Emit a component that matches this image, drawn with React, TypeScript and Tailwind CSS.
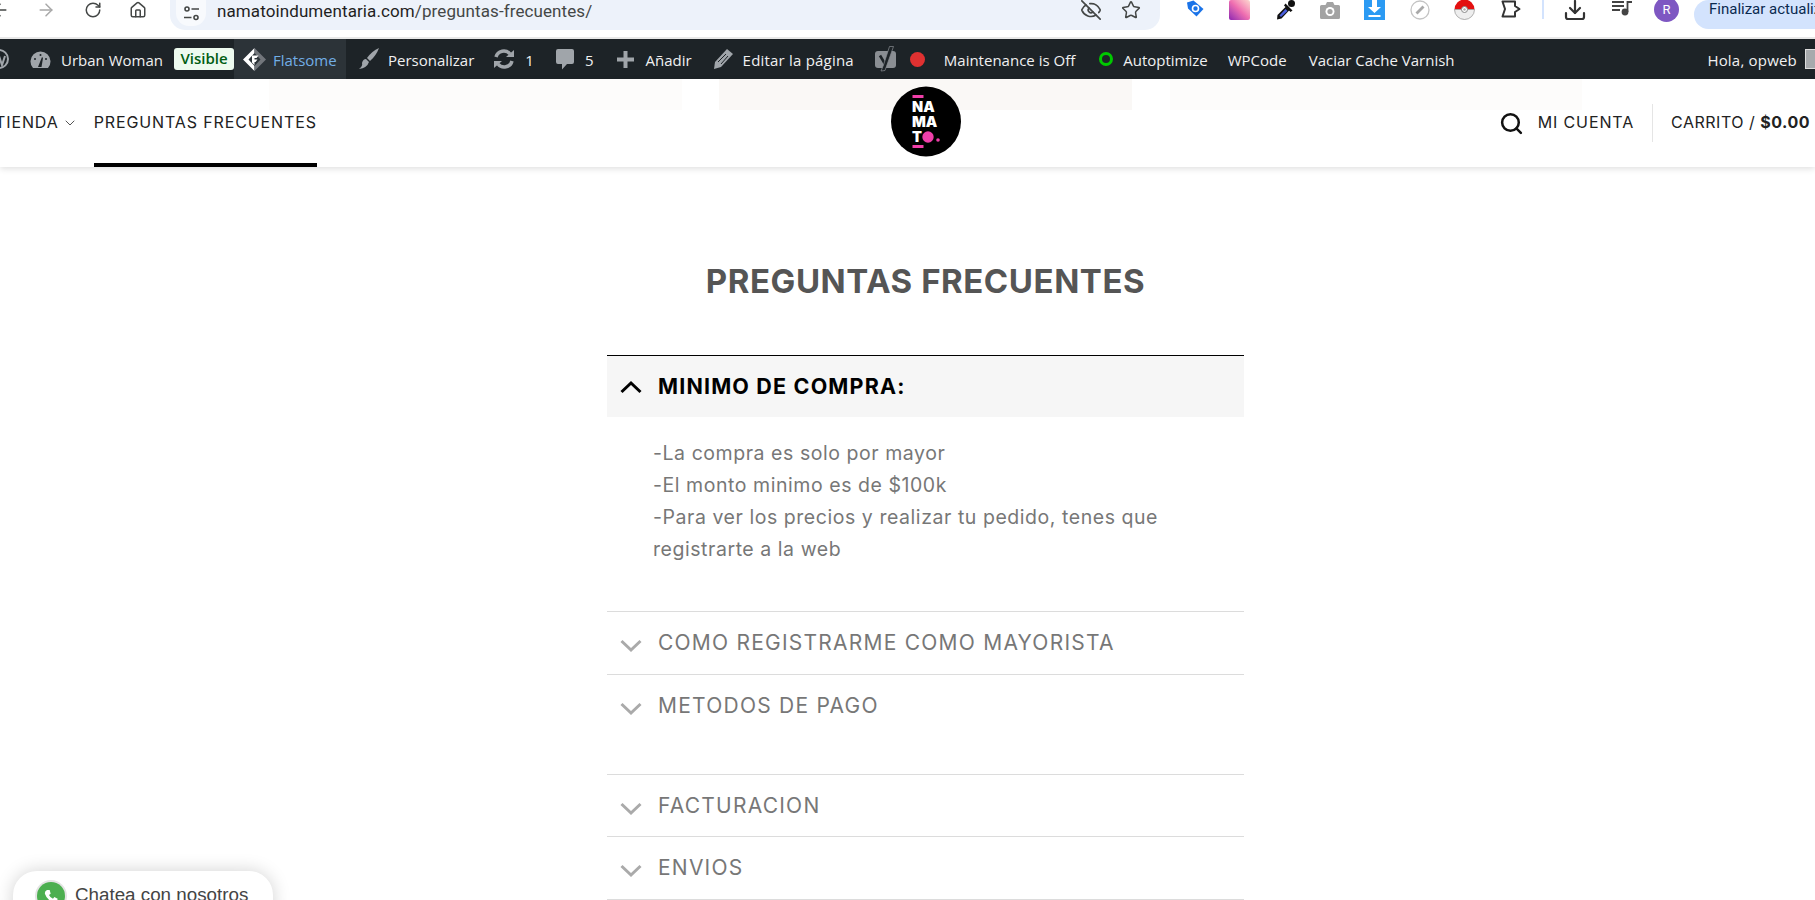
import { ArrowLeft, ArrowRight, RotateCw, House, EyeOff, Star, Search, ChevronDown, Download } from "lucide-react";

const UI = "font-['Open_Sans','Noto_Sans',sans-serif]";
const M = "font-['Inter','Liberation_Sans',sans-serif]";

function Chevron({ up, className }: { up?: boolean; className?: string }) {
  return (
    <svg width="22" height="14" viewBox="0 0 22 14" fill="none" className={className}>
      <path d={up ? "M1.5 12L11 3L20.5 12" : "M1.5 2L11 11L20.5 2"} stroke="currentColor" strokeWidth="3" />
    </svg>
  );
}

function Row({ label, tall }: { label: string; tall?: boolean }) {
  return (
    <div className={`border-t border-[#dcdcdc] ${tall ? "h-[100px]" : "h-[62.5px]"} pt-[20px] flex items-start`}>
      <Chevron className="ml-[13px] mt-[7px] text-[#aaaaaa] shrink-0" />
      <span className={`ml-[16px] text-[21px] leading-[22px] tracking-[1.23px] text-[#777777] ${M}`}>{label}</span>
    </div>
  );
}

function ChromeBar() {
  return (
    <div className="h-[37px] flex items-start bg-white overflow-hidden [&>*]:shrink-0">
      <ArrowLeft size={20} className="ml-[-10px] text-[#444746]" strokeWidth={1.8} />
      <ArrowRight size={20} className="ml-[26px] text-[#a8a8a8]" strokeWidth={1.8} />
      <RotateCw size={18} className="ml-[28px] mt-[1px] text-[#444746]" strokeWidth={2} />
      <House size={18} className="ml-[27px] mt-[1px] text-[#444746]" strokeWidth={2} />
      <div className="ml-[23px] w-[990px] h-[30px] bg-[#edf2fa] rounded-b-[15px] flex items-start relative">
        <div className="ml-[6px] w-[30px] h-[26px] rounded-b-[13px] bg-[#f8fafd] flex items-center justify-center">
          <svg width="17" height="17" viewBox="0 0 17 17" fill="none" stroke="#444746" strokeWidth="1.6">
            <circle cx="4" cy="4" r="2" />
            <path d="M8.5 4H16M1 12.5H8.5" />
            <circle cx="13" cy="12.5" r="2" />
          </svg>
        </div>
        <span className="ml-[11px] text-[17px] leading-[22px] text-[#1f1f1f] font-['Roboto',sans-serif] tracking-[0.1px]">
          namatoindumentaria.com<span className="text-[#444746]">/preguntas-frecuentes/</span>
        </span>
        <EyeOff size={22} className="absolute left-[910px] top-[-1px] text-[#444746]" strokeWidth={1.8} />
        <Star size={20} className="absolute left-[951px] top-[0px] text-[#444746]" strokeWidth={1.8} />
      </div>

      {/* price tag */}
      <svg width="19" height="18" viewBox="0 0 19 18" className="ml-[26px]">
        <path d="M1 2.5L7.5 0.5L17.5 9L10.5 16.5L2 8.5Z" fill="#1a73e8" />
        <circle cx="9.5" cy="8.5" r="3" fill="none" stroke="#fff" strokeWidth="1.6" />
      </svg>
      <div className="ml-[24px] w-[21px] h-[20px] rounded-[2px] bg-gradient-to-bl from-[#fbd9cf] via-[#ee6db0] to-[#8f1fb0]" />
      {/* eyedropper */}
      <svg width="20" height="20" viewBox="0 0 20 20" className="ml-[26px]">
        <circle cx="15.5" cy="3.5" r="3.5" fill="#111" />
        <path d="M9.5 3.5L16.5 10.5L14.5 12L8 5.5Z" fill="#111" />
        <path d="M10 6.5L13.5 10L5.5 18.5L1 19.5L1.5 15Z" fill="#111" />
        <path d="M9.5 9L11.5 11L5 17L3.5 15.5Z" fill="#4a5fe0" />
      </svg>
      {/* camera */}
      <svg width="20" height="18" viewBox="0 0 20 18" className="ml-[24px] mt-[1px]">
        <path d="M1.5 4H5.5L7 1H13L14.5 4H18.5Q20 4 20 5.5V16.5Q20 18 18.5 18H1.5Q0 18 0 16.5V5.5Q0 4 1.5 4Z" fill="#a3a3a3" />
        <circle cx="10" cy="10.5" r="4.5" fill="#fff" />
        <circle cx="10" cy="10.5" r="2.6" fill="#a3a3a3" />
      </svg>
      {/* blue download */}
      <svg width="21" height="20" viewBox="0 0 21 20" className="ml-[24px]">
        <rect width="21" height="20" fill="#2b9af3" />
        <path d="M8 0H13V7H17L10.5 13L4 7H8Z" fill="#fff" />
        <rect x="4.5" y="15" width="12" height="2" fill="#fff" />
      </svg>
      {/* compass */}
      <svg width="20" height="20" viewBox="0 0 20 20" className="ml-[25px]">
        <circle cx="10" cy="10" r="9" fill="#fff" stroke="#c4c4c4" strokeWidth="1.3" />
        <path d="M5.5 12.5L12.5 5.5L14.5 7.5L7.5 14.5Z" fill="#a9a9a9" />
      </svg>
      {/* pokeball */}
      <svg width="21" height="20" viewBox="0 0 21 20" className="ml-[24px]">
        <path d="M0.5 9.5a10 10 0 0 1 20 0Z" fill="#e31010" />
        <path d="M0.5 9.5a10 10 0 0 0 20 0Z" fill="#eeeeee" stroke="#8e8e8e" strokeWidth="0.7" />
        <circle cx="10.5" cy="9.5" r="3" fill="#fff" stroke="#888" />
        <circle cx="10.5" cy="9.5" r="1.2" fill="#aaa" />
      </svg>
      {/* extensions */}
      <svg width="20" height="18" viewBox="0 0 20 18" fill="none" stroke="#333" strokeWidth="2" strokeLinejoin="round" className="ml-[26px]">
        <path d="M1.5 1.5H14V6L18.5 9L14 12V16.5H1.5L4 9Z" />
      </svg>
      <div className="ml-[21px] w-[2px] h-[19px] bg-[#d3e3fd]" />
      <Download size={24} className="ml-[19px] mt-[-2px] text-[#333]" strokeWidth={2.2} />
      {/* queue music */}
      <svg width="20" height="16" viewBox="0 0 20 16" className="ml-[25px]">
        <path d="M0 1H12V3H0ZM0 5H12V7H0ZM0 9H8V11H0Z" fill="#444" />
        <circle cx="13" cy="12" r="3.4" fill="#444" />
        <path d="M14.6 12V1H20V3H16.4V12Z" fill="#444" />
      </svg>
      <div className="ml-[22px] mt-[-3px] w-[25px] h-[25px] rounded-full bg-[#7e57c2] text-white text-[13px] flex items-center justify-center font-['Roboto',sans-serif]">
        R
      </div>
      <div className="ml-[15px] w-[140px] h-[29px] rounded-l-[15px] bg-[#d3e3fd] pl-[15px] overflow-hidden whitespace-nowrap">
        <span className="text-[15px] leading-[18px] block text-[#0b2a50] font-['Roboto',sans-serif]">Finalizar actualización</span>
      </div>
    </div>
  );
}

function WpBar() {
  const gray = "#a0a5aa";
  const item = `mt-[2px] text-[15px] leading-[38px] text-[#f0f0f1] whitespace-nowrap ${UI}`;
  return (
    <div className="h-[40px] bg-[#1d2327] flex items-center overflow-hidden shrink-0 [&>*]:shrink-0">
      <svg width="20" height="20" viewBox="0 0 20 20" className="ml-[-11px]">
        <circle cx="10" cy="10" r="9" fill="none" stroke={gray} strokeWidth="2" />
        <path d="M5 6L9 16L11 10L13 16L16 7" fill="none" stroke={gray} strokeWidth="2" />
      </svg>
      <svg width="21" height="19" viewBox="0 0 21 19" className="ml-[21px]">
        <path d="M3 18A10 10 0 1 1 18 18Z" fill={gray} />
        <path d="M8 17L12 7L13 8L11.5 17Z" fill="#1d2327" />
        <circle cx="5" cy="9" r="1" fill="#1d2327" />
        <circle cx="10.5" cy="5" r="1" fill="#1d2327" />
        <circle cx="16" cy="9" r="1" fill="#1d2327" />
      </svg>
      <span className={`ml-[10px] ${item}`}>Urban Woman</span>
      <span className={`ml-[11px] w-[60px] h-[22px] rounded-[3px] bg-[#edfaef] text-[#005c12] text-[15px] leading-[20px] text-center font-semibold ${UI}`}>Visible</span>
      <div className="w-[112px] h-[40px] bg-[#2c3338] flex items-center">
        <svg width="25" height="25" viewBox="0 0 25 25" className="ml-[8px]">
          <path d="M12.5 1L1 12.5L12.5 24L12.5 19L6.5 12.5L12.5 6Z" fill="#fff" />
          <path d="M12.5 1L24 12.5L12.5 24L12.5 19L18.5 12.5L12.5 6Z" fill="#72767b" />
          <path d="M10 8.5H16.5L14.5 11H12.5V12.5H15.5L13.5 15H12.5V18L10 15.5Z" fill="#fff" />
        </svg>
        <span className={`ml-[6px] mt-[2px] text-[15px] leading-[38px] text-[#72aee6] ${UI}`}>Flatsome</span>
      </div>
      <svg width="22" height="22" viewBox="0 0 22 22" className="ml-[12px]">
        <path d="M21 0Q14 3 9 10L12 13Q18 8 21 0Z" fill={gray} />
        <path d="M8 11L11 14Q9 20 1 21Q5 18 4 15Q5 11 8 11Z" fill={gray} />
      </svg>
      <span className={`ml-[8px] ${item}`}>Personalizar</span>
      <svg width="22" height="20" viewBox="0 0 22 20" fill="none" className="ml-[19px]">
        <path d="M3 8A8 8 0 0 1 17 5" stroke={gray} strokeWidth="3.5" />
        <path d="M19 12A8 8 0 0 1 5 15" stroke={gray} strokeWidth="3.5" />
        <path d="M13 8L21 8L21 1Z" fill={gray} />
        <path d="M9 12L1 12L1 19Z" fill={gray} />
      </svg>
      <span className={`ml-[10px] ${item}`}>1</span>
      <svg width="18" height="21" viewBox="0 0 18 21" className="ml-[22px]">
        <path d="M2 0H16Q18 0 18 2V13Q18 15 16 15H11L6 20.5V15H2Q0 15 0 13V2Q0 0 2 0Z" fill={gray} />
      </svg>
      <span className={`ml-[11px] ${item}`}>5</span>
      <svg width="17" height="17" viewBox="0 0 17 17" className="ml-[24px]">
        <path d="M6.5 0H10.5V6.5H17V10.5H10.5V17H6.5V10.5H0V6.5H6.5Z" fill={gray} />
      </svg>
      <span className={`ml-[11px] ${item}`}>Añadir</span>
      <svg width="19" height="20" viewBox="0 0 19 20" className="ml-[22px]">
        <path d="M13 0L19 5L7 18L0 20L1 13Z" fill={gray} />
        <path d="M4 13L12 5M7 15L14 7" stroke="#1d2327" strokeWidth="1" />
      </svg>
      <span className={`ml-[10px] tracking-[0.2px] ${item}`}>Editar la página</span>
      <svg width="22" height="26" viewBox="0 0 22 26" className="ml-[21px]">
        <rect x="0" y="5" width="21" height="17" rx="3" fill="#8a8e93" />
        <path d="M5 9.5L10 18" stroke="#1d2327" strokeWidth="2.6" fill="none" />
        <path d="M14.5 0.5H18.5L10 24.5L6 25L8.5 19Z" fill="#1d2327" stroke="#8a8e93" strokeWidth="0.7" />
      </svg>
      <div className="ml-[13px] w-[15px] h-[15px] rounded-full bg-[#e03131]" />
      <span className={`ml-[19px] ${item}`}>Maintenance is Off</span>
      <div className="ml-[24px] w-[14px] h-[14px] rounded-full border-[3px] border-[#00c800]" />
      <span className={`ml-[10px] ${item}`}>Autoptimize</span>
      <span className={`ml-[20px] ${item}`}>WPCode</span>
      <span className={`ml-[22px] ${item}`}>Vaciar Cache Varnish</span>
      <div className="flex-1" />
      <span className={`tracking-[0.2px] ${item}`}>Hola, opweb</span>
      <div className="ml-[8px] mr-[-8px] w-[18px] h-[20px] bg-[#a7aaad] border border-[#ddd]" />
    </div>
  );
}

function Logo() {
  return (
    <svg width="70" height="71" viewBox="0 0 70 71">
      <circle cx="35" cy="35.5" r="35" fill="#000" />
      <rect x="21.5" y="9" width="11" height="3" fill="#f03fa9" />
      <g fontFamily="Inter, sans-serif" fontWeight="900" fontSize="14.5" fill="#fff">
        <text x="21" y="26">NA</text>
        <text x="21" y="41">MA</text>
        <text x="21" y="56">T</text>
      </g>
      <circle cx="37" cy="51" r="5.7" fill="#f03fa9" />
      <circle cx="47" cy="54" r="1.8" fill="#f03fa9" />
      <rect x="21.5" y="59" width="11" height="3" fill="#f03fa9" />
    </svg>
  );
}

function SiteHeader() {
  const nav = `text-[16px] leading-[20px] tracking-[0.88px] text-[#222] whitespace-nowrap ${M}`;
  return (
    <div className="h-[88px] bg-white shadow-[0_2px_6px_rgba(0,0,0,0.12)] relative shrink-0 flex items-center">
      <div className="absolute left-[269px] top-0 w-[413px] h-[31px] bg-[#fdfcfb]" />
      <div className="absolute left-[719px] top-0 w-[413px] h-[31px] bg-[#faf8f6]" />
      <div className="absolute left-[1170px] top-0 w-[412px] h-[31px] bg-[#fdfcfb]" />
      <span className={`relative ml-[-5px] mb-[2px] ${nav}`}>TIENDA</span>
      <ChevronDown size={16} className="relative ml-[3px] text-[#555]" strokeWidth={1.5} />
      <div className="relative ml-[16px] h-[88px] flex items-center border-b-[4px] border-black">
        <span className={`${nav} mt-[2px]`}>PREGUNTAS FRECUENTES</span>
      </div>
      <div className="absolute left-[891px] top-[7px]"><Logo /></div>
      <div className="flex-1" />
      <Search size={25} className="relative text-[#111]" strokeWidth={2.4} />
      <span className={`relative ml-[14px] mb-[2px] ${nav}`}>MI CUENTA</span>
      <div className="relative ml-[18px] w-px h-[38px] bg-[#e5e5e5]" />
      <span className={`relative ml-[18px] mr-[5px] mb-[2px] text-[16px] leading-[20px] tracking-[0.5px] text-[#222] whitespace-nowrap ${M}`}>CARRITO / <b className="font-bold">$0.00</b></span>
    </div>
  );
}

export default function App() {
  return (
    <div className="w-[1815px] h-[900px] relative overflow-hidden bg-white flex flex-col">
      <ChromeBar />
      <div className="h-[2px] bg-[#e8e8e8] shrink-0" />
      <WpBar />
      <SiteHeader />
      <div className="ml-[607px] w-[637px] shrink-0">
        <h1 className={`mt-[96px] text-center text-[33px] leading-[36px] font-bold tracking-[0.55px] text-[#555555] ${M}`}>PREGUNTAS FRECUENTES</h1>
        <div className="mt-[56px]">
          <div className="border-t border-black h-[62px] bg-[#f6f6f6] flex items-center">
            <Chevron up className="ml-[13px] text-black shrink-0" />
            <span className={`ml-[16px] text-[21.5px] font-bold tracking-[1.17px] text-black ${M}`}>MINIMO DE COMPRA:</span>
          </div>
          <div className={`h-[194px] pt-[20px] pl-[46px] pr-[50px] text-[19.5px] leading-[32px] tracking-[0.55px] text-[#777777] ${M}`}>
            <p>-La compra es solo por mayor</p>
            <p>-El monto minimo es de $100k</p>
            <p>-Para ver los precios y realizar tu pedido, tenes que registrarte a la web</p>
          </div>
          <Row label="COMO REGISTRARME COMO MAYORISTA" />
          <Row label="METODOS DE PAGO" tall />
          <Row label="FACTURACION" />
          <Row label="ENVIOS" />
          <div className="border-t border-[#dcdcdc]" />
        </div>
      </div>
      <div className="absolute left-[13px] top-[871px] w-[260px] h-[60px] rounded-[24px] bg-white shadow-[0_0_18px_rgba(0,0,0,0.18)] flex items-start">
        <div className="ml-[24px] mt-[11px] w-[28px] h-[28px] rounded-full bg-[#4caf50] ring-2 ring-[#e4e4e4] flex items-center justify-center">
          <svg width="16" height="16" viewBox="0 0 24 24">
            <path d="M6 3L10 3L11.5 8.5L9 10.5Q11 15 15 16L17 13.5L22 16L21 20Q19 22 15 21Q6 18 3 9Q2 5 6 3Z" fill="#fff" />
          </svg>
        </div>
        <span className="ml-[10px] mt-[13px] text-[18.8px] leading-[22px] text-[#444] font-['Liberation_Sans',sans-serif] whitespace-nowrap">Chatea con nosotros</span>
      </div>
    </div>
  );
}
